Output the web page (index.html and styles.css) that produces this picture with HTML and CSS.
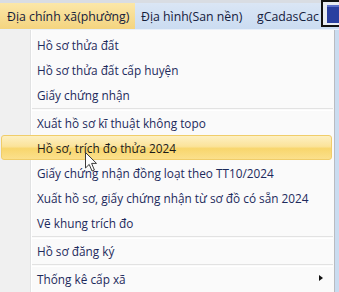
FILE: index.html
```html
<!DOCTYPE html>
<html lang="vi">
<head>
<meta charset="utf-8">
<link rel="stylesheet" href="styles.css">
</head>
<body>
<div class="screen">
  <div class="topstrip"></div>
  <div class="menubar">
    <div class="tab tab-active">Địa chính xã(phường)</div>
    <div class="tab tab-2">Địa hình(San nền)</div>
    <div class="tab tab-3">gCadasCac</div>
    <div class="winbox"><div class="winbox-inner"></div></div>
  </div>
  <div class="dropdown">
    <div class="item">Hồ sơ thửa đất</div>
    <div class="item">Hồ sơ thửa đất cấp huyện</div>
    <div class="item">Giấy chứng nhận</div>
    <div class="sep"></div>
    <div class="item">Xuất hồ sơ kĩ thuật không topo</div>
    <div class="item item-hot">Hồ sơ, trích đo thửa 2024</div>
    <div class="item">Giấy chứng nhận đồng loạt theo TT10/2024</div>
    <div class="item">Xuất hồ sơ, giấy chứng nhận từ sơ đồ có sẵn 2024</div>
    <div class="item">Vẽ khung trích đo</div>
    <div class="sep"></div>
    <div class="item">Hồ sơ đăng ký</div>
    <div class="sep"></div>
    <div class="item item-sub">Thống kê cấp xã<span class="arrow"></span></div>
  </div>
  <svg class="cursor" width="14" height="22" viewBox="0 0 14 22">
    <path d="M1.5 1.5 L1.5 17 L5.2 13.4 L8 20 L10.4 19 L7.6 12.4 L12.5 12.4 Z" fill="#fdfdfd" stroke="#3a3a3a" stroke-width="1" stroke-linejoin="round"/>
  </svg>
</div>
</body>
</html>
```
FILE: styles.css
```css
html, body {
  margin: 0;
  padding: 0;
}
body {
  width: 339px;
  height: 292px;
  overflow: hidden;
  background: #c9dbef;
  font-family: "Open Sans", "Noto Sans", "Liberation Sans", sans-serif;
}
.screen {
  position: relative;
  width: 339px;
  height: 292px;
  overflow: hidden;
  background: #cadcf0;
}
.topstrip {
  height: 3px;
  background: #d9dde3;
}
.menubar {
  height: 26px;
  display: flex;
  align-items: stretch;
  background: linear-gradient(#dae6f5, #cbdcf1);
  border-bottom: 1px solid #e9f0f9;
  position: relative;
}
.tab {
  font-size: 12.3px;
  color: #15203c;
  display: flex;
  align-items: center;
  white-space: nowrap;
  overflow: hidden;
  box-sizing: border-box;
}
.tab-active {
  width: 135px;
  padding-left: 7px;
  background: linear-gradient(#fbe7a8, #f4d47f);
}
.tab-2 {
  padding-left: 6px;
  width: 122px;
}
.tab-3 {
  width: 64px;
}
.winbox {
  position: absolute;
  right: 0;
  top: -3px;
  width: 16px;
  height: 23px;
  border: 2px solid #111;
  border-right: none;
  background: #e8ecf2;
}
.winbox-inner {
  margin: 3px 0 0 4px;
  height: 16px;
  background: #2a3fa0;
  border-top: 2px solid #5a6fc9;
}
.dropdown {
  width: 335px;
  height: 264px;
  box-sizing: border-box;
  padding-top: 2px;
  border-right: 1px solid #b9bcc1;
  background: linear-gradient(to right, #f0f0f0 0, #f0f0f0 30px, #e1e2e3 30px, #e1e2e3 31px, #ffffff 31px, #ffffff 32px, #fafafa 32px);
}
.item {
  height: 25px;
  box-sizing: border-box;
  display: flex;
  align-items: center;
  padding-left: 37px;
  margin-right: 2px;
  font-size: 11.8px;
  color: #1d2a5c;
  white-space: nowrap;
  position: relative;
}
.item-hot {
  margin-left: 1px;
  padding-left: 35px;
  color: #1a1a1a;
  border: 1px solid #f0cd6a;
  border-radius: 3px;
  background: linear-gradient(#fdf0c2 0%, #fbe39a 45%, #f8d66d 55%, #fbe08c 100%);
}
.sep {
  height: 3px;
  margin-left: 32px;
  margin-right: 1px;
  border-top: 1px solid #e2e2e2;
  border-bottom: 1px solid #ffffff;
  box-sizing: border-box;
  transform: translateY(1px);
}
.item-sub .arrow {
  position: absolute;
  right: 9px;
  top: 9px;
  width: 0;
  height: 0;
  border-top: 3.5px solid transparent;
  border-bottom: 3.5px solid transparent;
  border-left: 4px solid #111;
}
.cursor {
  position: absolute;
  left: 84px;
  top: 151px;
}
```
